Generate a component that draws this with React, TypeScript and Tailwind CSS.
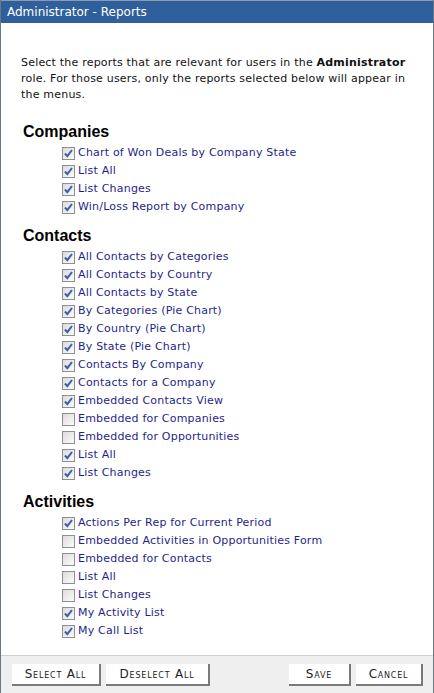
import React from "react";

type Report = { label: string; checked: boolean };

const sections: { title: string; items: Report[] }[] = [
  {
    title: "Companies",
    items: [
      { label: "Chart of Won Deals by Company State", checked: true },
      { label: "List All", checked: true },
      { label: "List Changes", checked: true },
      { label: "Win/Loss Report by Company", checked: true },
    ],
  },
  {
    title: "Contacts",
    items: [
      { label: "All Contacts by Categories", checked: true },
      { label: "All Contacts by Country", checked: true },
      { label: "All Contacts by State", checked: true },
      { label: "By Categories (Pie Chart)", checked: true },
      { label: "By Country (Pie Chart)", checked: true },
      { label: "By State (Pie Chart)", checked: true },
      { label: "Contacts By Company", checked: true },
      { label: "Contacts for a Company", checked: true },
      { label: "Embedded Contacts View", checked: true },
      { label: "Embedded for Companies", checked: false },
      { label: "Embedded for Opportunities", checked: false },
      { label: "List All", checked: true },
      { label: "List Changes", checked: true },
    ],
  },
  {
    title: "Activities",
    items: [
      { label: "Actions Per Rep for Current Period", checked: true },
      { label: "Embedded Activities in Opportunities Form", checked: false },
      { label: "Embedded for Contacts", checked: false },
      { label: "List All", checked: false },
      { label: "List Changes", checked: false },
      { label: "My Activity List", checked: true },
      { label: "My Call List", checked: true },
    ],
  },
];

function Check({ checked }: { checked: boolean }) {
  return (
    <span className="w-[13px] h-[13px] border border-[#8e8f8f] bg-gradient-to-br from-[#dcdcdc] to-[#fbfbfb] flex items-center justify-center shrink-0">
      {checked && (
        <svg width="9" height="9" viewBox="0 0 9 9">
          <path d="M1 4.5 L3.3 7.2 L8 1" stroke="#3d5fa8" strokeWidth="2" fill="none" />
        </svg>
      )}
    </span>
  );
}

function Btn({ children, w }: { children: React.ReactNode; w: string }) {
  return (
    <button className={"h-[22px] bg-white border-r-2 border-b-2 border-[#7a7a7a] text-[12px] text-[#222] [font-variant:small-caps] tracking-[0.8px] " + w}>
      {children}
    </button>
  );
}

export default function App() {
  return (
    <div className="w-[434px] h-[693px] flex flex-col border-l border-r border-[#6b7785] bg-white font-['DejaVu_Sans',sans-serif]">
      <div className="h-[23px] bg-[#30609b] border-t border-[#8a9bb0] text-white text-[12px] px-[6px] flex items-center">
        Administrator - Reports
      </div>
      <div className="flex-1 pl-[20px] pr-[16px] pt-[32px]">
        <p className="text-[11px] leading-[16px] tracking-[0.2px] text-[#111]">
          Select the reports that are relevant for users in the <b>Administrator</b> role. For those users, only the reports selected below will appear in the menus.
        </p>
        {sections.map((s, i) => (
          <div key={s.title} className={i === 0 ? "mt-[19px]" : "mt-[10px]"}>
            <h2 className="font-['Liberation_Sans',sans-serif] font-bold text-[16px] leading-[20px] text-black pl-[2px]">
              {s.title}
            </h2>
            <div className="pl-[41px] pt-[2px]">
              {s.items.map((it) => (
                <label key={it.label} className="flex items-center h-[18px] gap-[3px] text-[11px] tracking-[0.2px] text-[#1f1f8a]">
                  <Check checked={it.checked} />
                  {it.label}
                </label>
              ))}
            </div>
          </div>
        ))}
      </div>
      <div className="h-[38px] bg-[#efefef] border-t border-[#cfcfcf] flex items-center pl-[11px] pr-[10px] gap-[5px]">
        <Btn w="w-[89px]">Select All</Btn>
        <Btn w="w-[104px]">Deselect All</Btn>
        <div className="flex-1" />
        <Btn w="w-[62px]">Save</Btn>
        <Btn w="w-[67px]">Cancel</Btn>
      </div>
    </div>
  );
}
